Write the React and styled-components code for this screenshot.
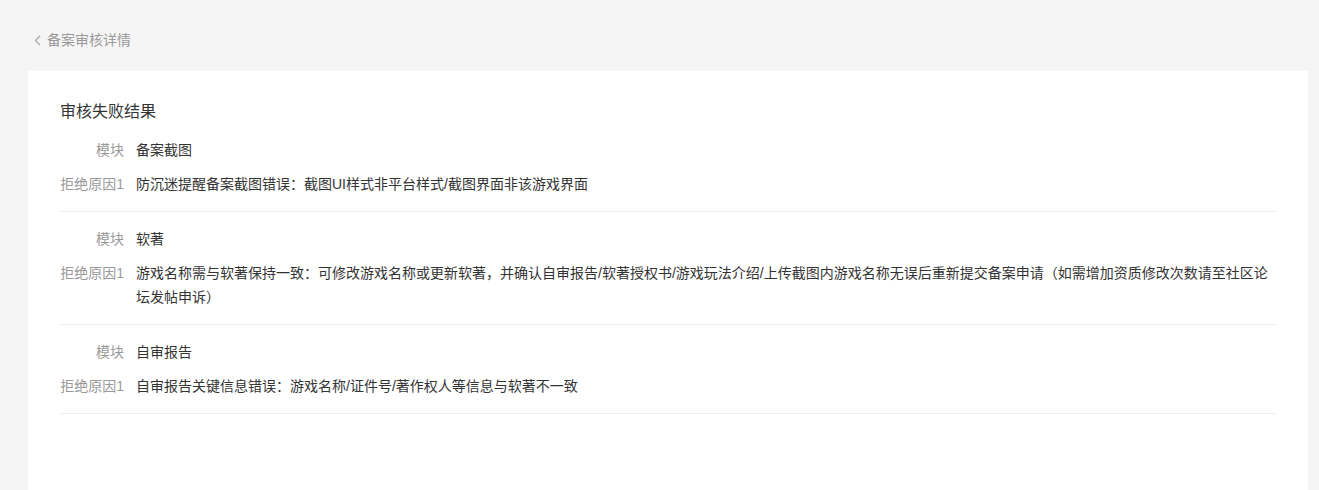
import React from "react";
import styled, { createGlobalStyle } from "styled-components";

const GlobalStyle = createGlobalStyle`
  html, body {
    margin: 0;
    padding: 0;
    background: #f5f5f5;
    font-family: "Liberation Sans", "Noto Sans CJK SC", sans-serif;
  }
`;

const sections = [
  {
    module: "备案截图",
    reasons: ["防沉迷提醒备案截图错误：截图UI样式非平台样式/截图界面非该游戏界面"],
  },
  {
    module: "软著",
    reasons: [
      "游戏名称需与软著保持一致：可修改游戏名称或更新软著，并确认自审报告/软著授权书/游戏玩法介绍/上传截图内游戏名称无误后重新提交备案申请（如需增加资质修改次数请至社区论坛发帖申诉）",
    ],
  },
  {
    module: "自审报告",
    reasons: ["自审报告关键信息错误：游戏名称/证件号/著作权人等信息与软著不一致"],
  },
];

const Page = () => {
  return (
    <Wrapper>
      <Back>
        <svg width="7" height="11" viewBox="0 0 7 11">
          <path d="M6 1 L1.5 5.5 L6 10" fill="none" stroke="#aaa" strokeWidth="1.3" />
        </svg>
        <span>备案审核详情</span>
      </Back>

      <Card>
        <Title>审核失败结果</Title>
        {sections.map((sec, idx) => (
          <Section key={idx}>
            <Row>
              <Label>模块</Label>
              <Value>{sec.module}</Value>
            </Row>
            {sec.reasons.map((r, i) => (
              <Row key={i}>
                <Label>拒绝原因{i + 1}</Label>
                <Value>{r}</Value>
              </Row>
            ))}
          </Section>
        ))}
      </Card>
    </Wrapper>
  );
};

const Wrapper = styled.div`
  min-height: 490px;
  display: flex;
  flex-direction: column;
  padding-left: 28px;
  width: 1280px;
`;

const Back = styled.div`
  display: flex;
  align-items: center;
  gap: 6px;
  height: 20px;
  padding: 30px 0 21px 6px;
  font-size: 14px;
  line-height: 20px;
  color: #999;
  cursor: pointer;
`;

const Card = styled.div`
  flex: 1;
  background: #fff;
  padding: 30px 32px 40px;
  min-height: 349px;
  box-sizing: border-box;
`;

const Title = styled.div`
  font-size: 16px;
  line-height: 22px;
  color: #333;
`;

const Section = styled.div`
  padding: 15px 0;
  border-bottom: 1px solid #eee;
`;

const Row = styled.div`
  display: flex;
  font-size: 14px;
  line-height: 24px;

  & + & {
    margin-top: 10px;
  }
`;

const Label = styled.div`
  flex: 0 0 64px;
  text-align: right;
  margin-right: 12px;
  color: #999;
  white-space: nowrap;
`;

const Value = styled.div`
  flex: 1;
  color: #333;
`;

export default function App() {
  return (
    <>
      <GlobalStyle />
      <Page />
    </>
  );
}
